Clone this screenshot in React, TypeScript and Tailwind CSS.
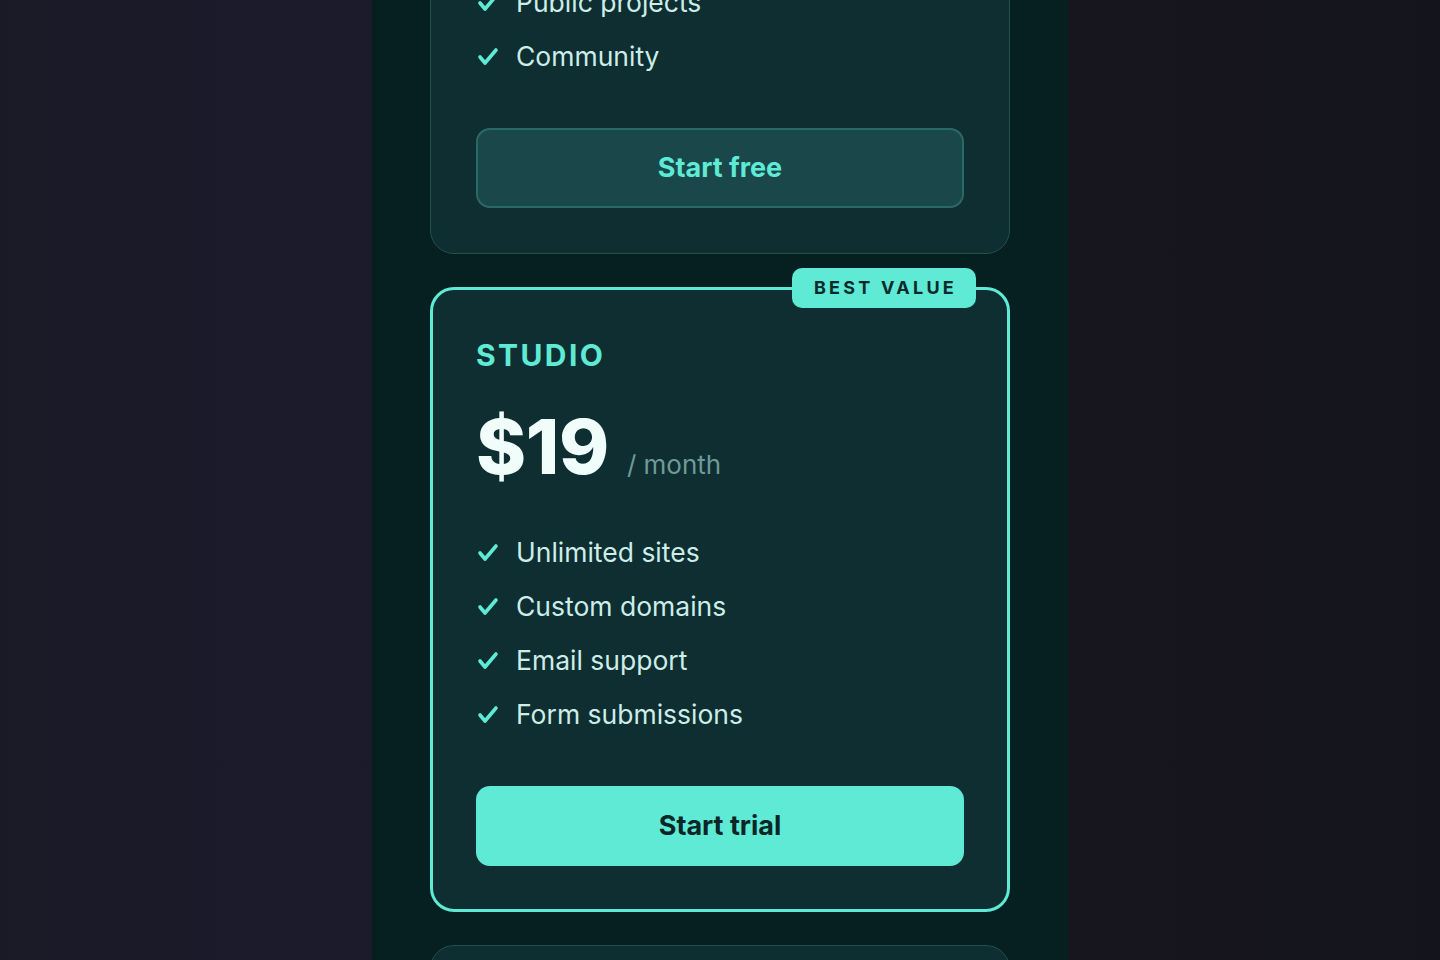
import React from "react";

const Check = () => (
  <svg width="24" height="24" viewBox="0 0 24 24" fill="none" stroke="#5eead4" strokeWidth="3.6" strokeLinecap="round" strokeLinejoin="round" className="shrink-0">
    <path d="M4 13 9 19 20 6" />
  </svg>
);

type Plan = {
  name: string;
  price: string;
  features: string[];
  cta: string;
  featured?: boolean;
};

const plans: Plan[] = [
  { name: "HOBBY", price: "$0", features: ["1 site", "Public projects", "Community"], cta: "Start free" },
  { name: "STUDIO", price: "$19", features: ["Unlimited sites", "Custom domains", "Email support", "Form submissions"], cta: "Start trial", featured: true },
  { name: "AGENCY", price: "$49", features: ["Everything in Studio", "Team seats", "Priority support", "Analytics"], cta: "Contact sales" },
];

function Card({ plan }: { plan: Plan }) {
  const f = plan.featured;
  return (
    <div
      className={
        f
          ? "relative rounded-[24px] border-[3px] border-[#5eead4] bg-[#0e2e31] px-[43px] pt-[47px] pb-[43px]"
          : "relative rounded-[24px] border border-[#21504d] bg-[#0e2e31] px-[45px] pt-[49px] pb-[45px]"
      }
    >
      {f && (
        <div className="absolute top-[-22px] right-[31px] h-[40px] rounded-[10px] bg-[#5eead4] pl-[22px] pr-[19px] flex items-center text-[18px] font-bold tracking-[0.18em] text-[#0b2a2b] leading-none">
          BEST VALUE
        </div>
      )}
      <div className="text-[30px] leading-[36px] font-bold tracking-[0.08em] text-[#5eead4]">{plan.name}</div>
      <div className="mt-[36px] flex items-baseline gap-[18px]">
        <span className="text-[76px] leading-[74px] font-extrabold tracking-[-0.005em] text-[#f0fdfa]">{plan.price}</span>
        <span className="text-[26px] text-[#6f9b97]">/ month</span>
      </div>
      <ul className={f ? "mt-[50px] flex flex-col gap-[18px]" : "mt-[49px] flex flex-col gap-[18px]"}>
        {plan.features.map((t) => (
          <li key={t} className="flex items-center gap-[16px] h-[36px] text-[26.5px] leading-[36px] text-[#ccede8]">
            <Check />
            <span>{t}</span>
          </li>
        ))}
      </ul>
      <button
        className={
          f
            ? "mt-[54px] w-full h-[80px] rounded-[14px] bg-[#5eead4] text-[27px] font-bold text-[#0b2627]"
            : "mt-[54px] w-full h-[80px] rounded-[14px] border-2 border-[#2a6a63] bg-[#19474a] text-[27px] font-bold text-[#5eead4]"
        }
      >
        {plan.cta}
      </button>
    </div>
  );
}

export default function App() {
  return (
    <div
      className="h-screen w-full overflow-hidden bg-[linear-gradient(90deg,#1a1a27_0%,#1c1b2c_22%,#17161f_78%,#14141c_100%)] flex justify-center"
      style={{ fontFamily: "Inter, 'Noto Sans', sans-serif" }}
    >
      <div className="w-[696px] h-full bg-[#061f20] px-[58px]">
        <div className="mt-[-316px] flex flex-col gap-[33px]">
          {plans.map((p) => (
            <Card key={p.name} plan={p} />
          ))}
        </div>
      </div>
    </div>
  );
}
